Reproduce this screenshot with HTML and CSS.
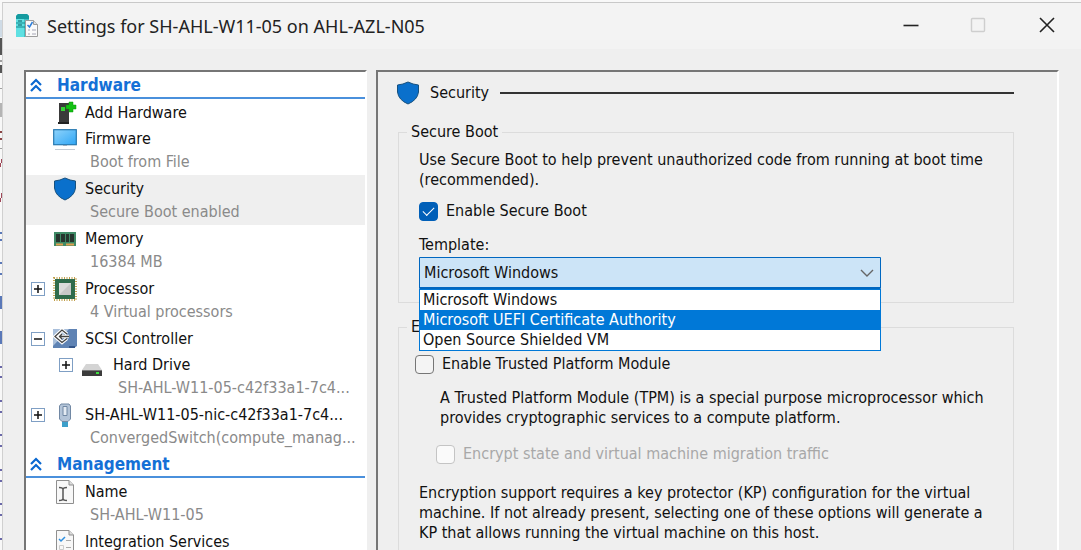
FILE: index.html
```
<!DOCTYPE html>
<html lang="en">
<head>
    <meta charset="UTF-8">
    <meta name="viewport" content="width=device-width, initial-scale=1.0">
    <title>Settings for SH-AHL-W11-05 on AHL-AZL-N05</title>
    <link rel="stylesheet" href="styles.css">
</head>
<body>
    <!-- edge of the window behind the dialog -->
    <svg class="behind" width="2" height="550" viewBox="0 0 2 550">
        <path d="M0 20h2v17H0z" fill="#cfdbe6"/>
        <path d="M0 38h2v17H0zM0 65h2v8H0z" fill="#555"/>
        <path d="M0 60h2v2H0zM0 88h2v1H0zM0 148h2v1H0z" fill="#a0a0a0"/>
        <path d="M0 103h2v14H0z" fill="#b4b4b4"/>
        <path d="M0 131h2v2H0zM0 138h2v2H0z" fill="#8a4545"/>
        <path d="M1 159h1v4H0v4h1zM1 193h1v5H0v4h1z" fill="#a04858"/>
        <path d="M0 232h2v2H0zM0 239h2v2H0zM0 262h2v2H0zM0 273h2v2H0zM0 296h2v13H0zM0 331h2v13H0z" fill="#5a78b8"/>
        <path d="M0 366h2v2H0zM0 376h2v2H0zM0 400h2v2H0zM0 411h2v2H0zM0 434h2v2H0zM0 445h2v2H0zM0 469h2v2H0zM0 480h2v2H0zM0 503h2v2H0zM0 514h2v2H0zM0 538h2v2H0z" fill="#6a68a8"/>
    </svg>

    <main class="dialog">
        <header class="titlebar">
            <svg width="24" height="24" viewBox="0 0 24 24">
                <path d="M1 2l2-2h9l2 2v21H1z" fill="#3fc1c5"/>
                <path d="M1 2l2-2h9l2 2v3H1z" fill="#159a9f"/>
                <path d="M1 5h8v18H1z" fill="#5fe0e2"/>
                <path d="M1 9h9M1 13h9" stroke="#15898e"/>
                <path d="M3 7h4M3 11h4" stroke="#0b5f66"/>
                <path d="M10.500 6.500h8l4 4v12h-12z" fill="#fafafa" stroke="#9c9c9c"/>
                <path d="M18.500 6.500v4h4" fill="#ddd" stroke="#9c9c9c"/>
                <path d="M12.500 11l2 2 3-5" fill="none" stroke="#2d7dd8" stroke-width="1.500"/>
                <path d="M13 16h2M13 20h2M17 16h4M17 20h4" stroke="#d0d0d8" stroke-width="2"/>
            </svg>
            <h1>Settings for SH-AHL-W11-05 on AHL-AZL-N05</h1>
            <div class="window-buttons">
                <button aria-label="Minimize"><svg width="18" height="18" viewBox="0 0 18 18"><path d="M1.500 8.500h15" stroke="#222" stroke-width="1.600"/></svg></button>
                <button aria-label="Maximize" disabled><svg width="18" height="18" viewBox="0 0 18 18"><rect x="1.500" y="1.500" width="13" height="13" rx="1" fill="none" stroke="#cecece" stroke-width="1.400"/></svg></button>
                <button aria-label="Close"><svg width="18" height="18" viewBox="0 0 18 18"><path d="M2 1l14 14M16 1l-14 14" stroke="#222" stroke-width="1.600"/></svg></button>
            </div>
        </header>

        <div class="content">
            <nav class="panel tree">
                <h2 class="section">
                    <svg width="14" height="14" viewBox="0 0 14 14"><path d="M2 7l5-5 5 5M2 13l5-5 5 5" fill="none" stroke="#0a68d0" stroke-width="2.200"/></svg>
                    Hardware
                </h2>
                <ul>
                    <li class="item">
                        <svg class="icon" width="24" height="24" viewBox="0 0 24 24">
                            <path d="M6 2h10v19H6z" fill="#3a3a3a"/>
                            <path d="M5 21h11v2H5z" fill="#222"/>
                            <path d="M8 6h4v4H8z" fill="#35d435"/>
                            <path d="M16 1h4v3h3v4h-3v3h-4V8h-3V4h3z" fill="#12c012" stroke="#0a960a" stroke-width=".5"/>
                        </svg>
                        <span class="name">Add Hardware</span>
                    </li>
                    <li class="item">
                        <svg class="icon" width="24" height="24" viewBox="0 0 24 24">
                            <defs><linearGradient id="screen" x2="1" y2="1"><stop stop-color="#8fd3fb"/><stop offset="1" stop-color="#2fa6f5"/></linearGradient></defs>
                            <rect x=".7" y="2.700" width="22.600" height="15" fill="url(#screen)" stroke="#2678b0" stroke-width="1.200"/>
                            <path d="M10 18h4v1h-4z" fill="#9ab"/>
                            <path d="M2 22.500h20" stroke="#c4ccd4"/>
                        </svg>
                        <span class="name">Firmware</span>
                        <span class="detail">Boot from File</span>
                    </li>
                    <li class="item selected">
                        <svg class="icon" width="24" height="24" viewBox="0 0 24 24"><path d="M12 1q5 2.500 10.500 3v7q-1 8-10.500 12Q2.500 19 1.500 11V4Q7 3.500 12 1z" fill="#0a70cc" stroke="#17517f"/></svg>
                        <span class="name">Security</span>
                        <span class="detail">Secure Boot enabled</span>
                    </li>
                    <li class="item">
                        <svg class="icon" width="24" height="24" viewBox="0 0 24 24">
                            <path d="M1 5h22v14H1z" fill="#3f8a66"/>
                            <path d="M3 7h4v8H3zM8 7h4v8H8zM13 7h3v8h-3zM17 7h4v8h-4z" fill="#26352e"/>
                            <path d="M3 17.500h7M13 17.500h8" stroke="#e0a050" stroke-width="2"/>
                        </svg>
                        <span class="name">Memory</span>
                        <span class="detail">16384 MB</span>
                    </li>
                    <li class="item">
                        <button class="expander" aria-label="Expand"><svg width="14" height="14" viewBox="0 0 14 14"><path d="M3 7h8M7 3v8" stroke="#111" stroke-width="1.500"/></svg></button>
                        <svg class="icon" width="24" height="24" viewBox="0 0 24 24">
                            <rect x="1" y="1" width="22" height="22" fill="none" stroke="#c2a04a" stroke-width="2" stroke-dasharray="1 1.500"/>
                            <path d="M2 2h20v20H2z" fill="#2f6b4c"/>
                            <path d="M6 6h12v12H6z" fill="#dcdcdc"/>
                            <path d="M18 6v12H6z" fill="#c8c8c8"/>
                        </svg>
                        <span class="name">Processor</span>
                        <span class="detail">4 Virtual processors</span>
                    </li>
                    <li class="item">
                        <button class="expander" aria-label="Collapse"><svg width="14" height="14" viewBox="0 0 14 14"><path d="M3 7h8" stroke="#111" stroke-width="1.500"/></svg></button>
                        <svg class="icon" width="24" height="24" viewBox="0 0 24 24">
                            <path d="M0 2h24v17l-3 2H0z" fill="#5f83b4"/>
                            <path d="M0 2h16L0 19z" fill="#a9bfdb"/>
                            <path d="M16 19h6v2h-6z" fill="#34568a"/>
                            <path d="M14 7L9 3 2 9.500l7 6 5-4M7 9.500h9M9 7l-2.500 2.500L9 12" fill="none" stroke="#fff" stroke-width="3.500"/>
                            <path d="M14 7L9 3 2 9.500l7 6 5-4M7 9.500h9M9 7l-2.500 2.500L9 12" fill="none" stroke="#444" stroke-width="1.300"/>
                        </svg>
                        <span class="name">SCSI Controller</span>
                    </li>
                    <li class="item nested">
                        <button class="expander" aria-label="Expand"><svg width="14" height="14" viewBox="0 0 14 14"><path d="M3 7h8M7 3v8" stroke="#111" stroke-width="1.500"/></svg></button>
                        <svg class="icon" width="24" height="24" viewBox="0 0 24 24">
                            <path d="M5 11h12l4 6H1z" fill="#d4d4d4"/>
                            <path d="M1 17h20v6H1z" fill="#3c3c3c"/>
                            <path d="M1 17h20v1H1z" fill="#777"/>
                            <path d="M15 19h3v2h-3z" fill="#3ee03e"/>
                        </svg>
                        <span class="name">Hard Drive</span>
                        <span class="detail">SH-AHL-W11-05-c42f33a1-7c4...</span>
                    </li>
                    <li class="item">
                        <button class="expander" aria-label="Expand"><svg width="14" height="14" viewBox="0 0 14 14"><path d="M3 7h8M7 3v8" stroke="#111" stroke-width="1.500"/></svg></button>
                        <svg class="icon" width="24" height="24" viewBox="0 0 24 24">
                            <path d="M9 16h6v8H9z" fill="#3c9fca"/>
                            <path d="M8 1h8l1.500 2v13L15 18.500H9L6.500 16V3z" fill="#b3c4d8" stroke="#7188a4"/>
                            <path d="M10 3.500h4v9h-4z" fill="#e4ebf3" stroke="#7188a4"/>
                        </svg>
                        <span class="name">SH-AHL-W11-05-nic-c42f33a1-7c4...</span>
                        <span class="detail">ConvergedSwitch(compute_manag...</span>
                    </li>
                </ul>
                <h2 class="section">
                    <svg width="14" height="14" viewBox="0 0 14 14"><path d="M2 7l5-5 5 5M2 13l5-5 5 5" fill="none" stroke="#0a68d0" stroke-width="2.200"/></svg>
                    Management
                </h2>
                <ul>
                    <li class="item">
                        <svg class="icon" width="24" height="24" viewBox="0 0 24 24">
                            <path d="M3.500.5H16l4.500 4.500v18.500h-17z" fill="#f8f8f8" stroke="#8f8f8f"/>
                            <path d="M16 .5V5h4.500" fill="#ddd" stroke="#8f8f8f"/>
                            <path d="M6 7.500q4 0 4 2 0-2 4-2M10 9v10M6 20.500q4 0 4-2 0 2 4 2" fill="none" stroke="#555" stroke-width="1.500"/>
                        </svg>
                        <span class="name">Name</span>
                        <span class="detail">SH-AHL-W11-05</span>
                    </li>
                    <li class="item">
                        <svg class="icon" width="24" height="24" viewBox="0 0 24 24">
                            <path d="M3.500.5H16l4.500 4.500v18.500h-17z" fill="#f8f8f8" stroke="#8f8f8f"/>
                            <path d="M16 .5V5h4.500" fill="#ddd" stroke="#8f8f8f"/>
                            <path d="M6 9l2 2 4-4" fill="none" stroke="#2d8fe0" stroke-width="1.500"/>
                            <path d="M13 10.500h5M13 17.500h5" stroke="#aaa"/>
                            <path d="M6.500 15.500h4v4h-4z" fill="none" stroke="#ccc"/>
                        </svg>
                        <span class="name">Integration Services</span>
                    </li>
                </ul>
            </nav>

            <section class="panel page">
                <div class="page-title">
                    <svg width="22" height="24" viewBox="1 0 22 24"><path d="M12 1q5 2.500 10.500 3v7q-1 8-10.500 12Q2.500 19 1.500 11V4Q7 3.500 12 1z" fill="#0a70cc" stroke="#17517f"/></svg>
                    <h2>Security</h2>
                    <hr>
                </div>

                <fieldset class="boot">
                    <legend>Secure Boot</legend>
                    <p>Use Secure Boot to help prevent unauthorized code from running at boot time<br>(recommended).</p>
                    <label class="check"><input type="checkbox" checked> Enable Secure Boot</label>
                    <label class="template-label" for="template">Template:</label>
                    <div class="combo">
                        <select id="template">
                            <option>Microsoft Windows</option>
                            <option>Microsoft UEFI Certificate Authority</option>
                            <option>Open Source Shielded VM</option>
                        </select>
                        <svg class="arrow" width="14" height="8" viewBox="0 0 14 8"><path d="M1 1l6 6 6-6" fill="none" stroke="#666" stroke-width="1.400"/></svg>
                        <ul class="options" role="listbox" aria-label="Template">
                            <li role="option">Microsoft Windows</li>
                            <li role="option" class="active" aria-selected="true">Microsoft UEFI Certificate Authority</li>
                            <li role="option">Open Source Shielded VM</li>
                        </ul>
                    </div>
                </fieldset>

                <fieldset class="encryption">
                    <legend>Encryption Support</legend>
                    <label class="check"><input type="checkbox"> Enable Trusted Platform Module</label>
                    <div class="indent">
                        <p>A Trusted Platform Module (TPM) is a special purpose microprocessor which<br>provides cryptographic services to a compute platform.</p>
                        <label class="check disabled"><input type="checkbox" disabled> Encrypt state and virtual machine migration traffic</label>
                    </div>
                    <p class="note">Encryption support requires a key protector (KP) configuration for the virtual<br>machine. If not already present, selecting one of these options will generate a<br>KP that allows running the virtual machine on this host.</p>
                </fieldset>
            </section>
        </div>
    </main>
</body>
</html>
```
FILE: styles.css
```
* {
    box-sizing: border-box;
}
body {
    margin: 0;
    height: 100vh;
    display: flex;
    overflow: hidden;
    background: #f8f8f8;
    color: #111;
    font-family: "DejaVu Sans Condensed", Tahoma, sans-serif;
    font-size: 16px;
    line-height: 20px;
}
h1, h2, p, ul {
    margin: 0;
    padding: 0;
    font-size: inherit;
    font-weight: normal;
}
ul {
    list-style: none;
}
svg {
    display: block;
    flex: none;
}
.behind {
    width: 2px;
}
.dialog {
    flex: 1;
    min-width: 0;
    display: flex;
    flex-direction: column;
    margin-top: 2px;
    border-top: 1px solid #c8c8c8;
    border-left: 1px solid #d0d0d0;
    background: #efefef;
}

/* title bar */
.titlebar {
    display: flex;
    align-items: center;
    gap: 8px;
    flex: none;
    height: 46px;
    padding-left: 12px;
    background: #f3f3f3;
}
.titlebar h1 {
    flex: 1;
    font-family: "Noto Sans", sans-serif;
    font-size: 18px;
    line-height: 24px;
    color: #222;
}
.window-buttons {
    display: flex;
}
.window-buttons button {
    display: flex;
    justify-content: center;
    align-items: center;
    width: 68px;
    height: 44px;
    padding: 0;
    border: none;
    background: none;
}

/* panels */
.content {
    flex: 1;
    min-height: 0;
    display: flex;
    gap: 9px;
    padding: 21px 22px 0 21px;
}
.panel {
    border: 2px solid #767676;
    border-right-color: #fff;
    border-bottom: none;
    overflow: hidden;
}
.tree {
    flex: none;
    width: 343px;
    background: #fff;
}
.page {
    flex: 1;
    min-width: 0;
    padding: 9px 43px 0 20px;
}

/* tree */
.section {
    display: flex;
    align-items: center;
    gap: 14px;
    height: 27px;
    padding-left: 3px;
    border-bottom: 2px solid #4a90dc;
    color: #1470d6;
    font-size: 17px;
    font-weight: bold;
}
.item {
    display: grid;
    grid-template-columns: 14px 24px 1fr;
    column-gap: 8px;
    padding: 2px 0 0 5px;
    line-height: 24px;
    white-space: nowrap;
}
.nested {
    padding-left: 33px;
}
.selected {
    background: #efefef;
}
.expander {
    grid-column: 1;
    grid-row: 1;
    align-self: center;
    display: flex;
    width: 14px;
    height: 14px;
    padding: 0;
    border: 1px solid #7f9fc4;
    background: #fff;
    justify-content: center;
    align-items: center;
}
.icon {
    grid-column: 2;
    grid-row: 1;
}
.name {
    grid-column: 3;
    grid-row: 1;
}
.detail {
    grid-column: 3;
    height: 24px;
    padding-left: 5px;
    line-height: 22px;
    color: #8a8a8a;
}

/* security page */
.page-title {
    display: flex;
    align-items: center;
    gap: 11px;
    height: 24px;
    margin-left: -1px;
}
.page-title hr {
    flex: 1;
    height: 2px;
    margin: 0;
    border: none;
    background: #333;
}
fieldset {
    min-width: 0;
    margin: 0;
    padding: 0 20px;
    border: 1px solid #dcdcdc;
}
legend {
    margin-left: -12px;
    padding: 0 4px;
}
.boot {
    margin-top: 17px;
    padding-bottom: 13px;
}
.boot p {
    margin-top: 8px;
}
.check {
    display: flex;
    align-items: center;
    gap: 8px;
}
.boot .check {
    margin: 11px 0 14px;
}
.check input {
    appearance: none;
    display: flex;
    justify-content: center;
    align-items: center;
    width: 19px;
    height: 19px;
    margin: 0;
    border: 1px solid #767676;
    border-radius: 4px;
    background: #f4f4f4;
}
.check input:checked {
    border-color: #005fb8;
    background: #005fb8;
}
.check input:checked::before {
    content: "";
    width: 10px;
    height: 5px;
    margin-bottom: 3px;
    border-left: 1px solid #fff;
    border-bottom: 1px solid #fff;
    transform: rotate(-45deg);
}
.check input:disabled {
    border-color: #c4c4c4;
    background: #fafafa;
}
.disabled {
    color: #a8a8a8;
}
.template-label {
    display: block;
}
.combo {
    position: relative;
    width: 462px;
    max-width: 100%;
    margin-top: 2px;
}
.combo select {
    appearance: none;
    display: block;
    width: 100%;
    height: 32px;
    padding: 0 4px;
    border: 1px solid #0067c0;
    border-bottom-width: 2px;
    border-radius: 1px;
    background: #cce4f7;
    color: #111;
    font: inherit;
}
.arrow {
    position: absolute;
    top: 12px;
    right: 7px;
}
.options {
    position: absolute;
    z-index: 1;
    top: 100%;
    left: 0;
    right: 0;
    border: 1px solid #0078d7;
    background: #fff;
}
.options li {
    height: 20px;
    padding-left: 3px;
}
.options .active {
    background: #0078d7;
    color: #fff;
}
.encryption {
    margin-top: 14px;
    height: 300px;
    padding: 0 16px;
}
.encryption legend {
    margin-left: -8px;
}
.encryption .check {
    margin-top: 17px;
}
.indent {
    padding-left: 21px;
}
.indent p {
    margin: 14px 0 0 4px;
}
.encryption .indent .check {
    margin-top: 16px;
}
.note {
    margin: 19px 0 0 4px;
}
```
